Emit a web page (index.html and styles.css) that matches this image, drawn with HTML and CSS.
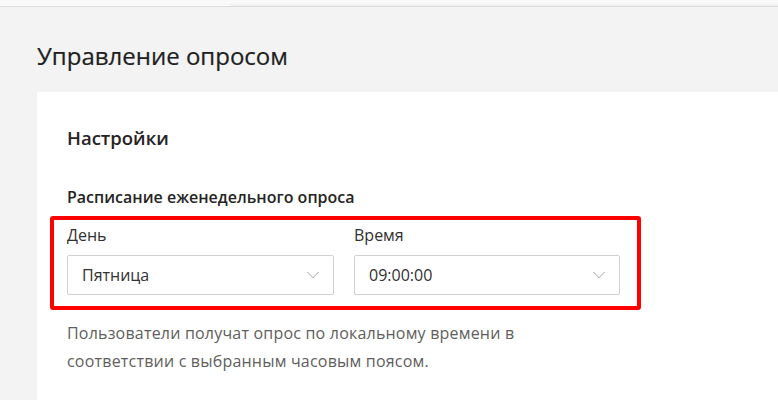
FILE: index.html
```html
<!DOCTYPE html>
<html>
<head>
    <meta charset="utf-8">
    <title>Управление опросом</title>
    <link rel="stylesheet" href="styles.css">
</head>
<body>
    <div class="topbar"><div class="topbar-shadow"></div></div>

    <div class="page">
        <h1>Управление опросом</h1>

        <div class="card">
            <h2>Настройки</h2>
            <h3>Расписание еженедельного опроса</h3>

            <div class="highlight">
                <div class="fields">
                    <div class="field">
                        <label>День</label>
                        <div class="select">
                            <span>Пятница</span>
                            <svg class="chevron" width="12" height="8" viewBox="0 0 12 8"><path d="M0.5 1 L6 6.8 L11.5 1" fill="none" stroke="#a6a6a6" stroke-width="1"/></svg>
                        </div>
                    </div>
                    <div class="field">
                        <label>Время</label>
                        <div class="select">
                            <span>09:00:00</span>
                            <svg class="chevron" width="12" height="8" viewBox="0 0 12 8"><path d="M0.5 1 L6 6.8 L11.5 1" fill="none" stroke="#a6a6a6" stroke-width="1"/></svg>
                        </div>
                    </div>
                </div>
            </div>

            <p class="hint">Пользователи получат опрос по локальному времени в<br>соответствии с выбранным часовым поясом.</p>
        </div>
    </div>
</body>
</html>
```

FILE: styles.css
```css
body {
    margin: 0;
    background: #f3f3f3;
    font-family: "Open Sans", "Noto Sans", sans-serif;
    color: #323130;
    height: 400px;
    overflow: hidden;
}
.topbar {
    height: 6px;
    background: #f9f9f9;
    border-bottom: 1px solid #dcdcdc;
    position: relative;
}
.topbar-shadow {
    position: absolute;
    left: 230px;
    right: 0;
    bottom: 0;
    height: 3px;
    background: linear-gradient(#f9f9f9, #ededed);
}
.page {
    padding-left: 37px;
}
h1 {
    margin: 0 0 20px 0;
    padding-top: 33px;
    font-size: 24px;
    font-weight: 400;
    line-height: 32px;
    color: #201f1e;
    -webkit-text-stroke: 0.2px #201f1e;
}
.card {
    background: #fff;
    padding: 32px 30px 40px 30px;
    min-height: 240px;
}
h2 {
    margin: 0;
    font-size: 18.5px;
    font-weight: 600;
    line-height: 28px;
    color: #252423;
}
h3 {
    margin: 34px 0 0 0;
    font-size: 16px;
    font-weight: 600;
    line-height: 22px;
    color: #252423;
}
.highlight {
    margin: 8px 0 0 -17px;
    width: 570px;
    height: 75px;
    border: 4px solid #ff0000;
    border-radius: 3px;
    padding: 3px 0 8px 13px;
    box-sizing: content-box;
}
.fields {
    display: grid;
    grid-template-columns: 267px 266px;
    gap: 20px;
}
.field label {
    display: block;
    font-size: 16px;
    line-height: 24px;
    margin-bottom: 8px;
}
.select {
    height: 38px;
    border: 1px solid #d2d0ce;
    border-radius: 2px;
    display: flex;
    align-items: center;
    justify-content: space-between;
    padding: 0 14px;
    font-size: 16px;
}
.hint {
    margin: 9px 0 0 0;
    font-size: 16px;
    letter-spacing: 0.2px;
    line-height: 28px;
    color: #605e5c;
}
```
